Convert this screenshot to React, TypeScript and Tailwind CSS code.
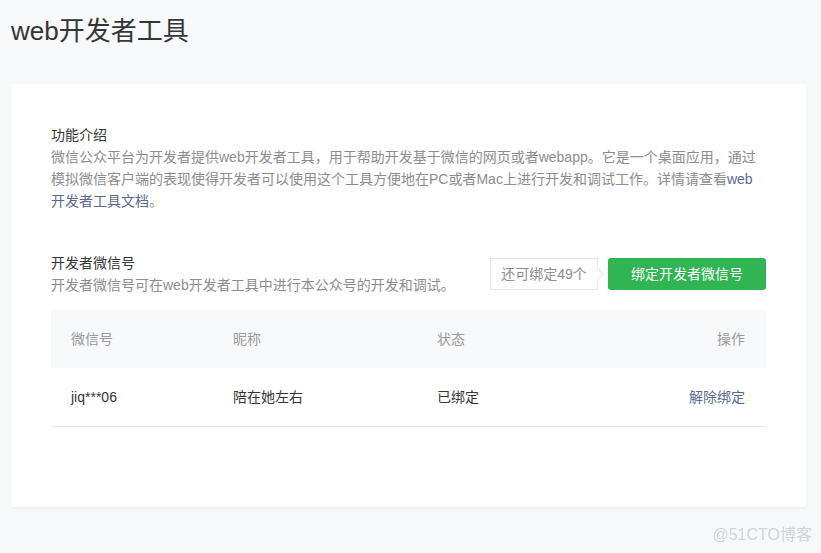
import React from "react";

const FONT = "font-['Liberation_Sans','Noto_Sans_CJK_SC',sans-serif]";

const App: React.FC = () => {
  return (
    <div className={`${FONT} relative h-[553px] w-[821px] overflow-hidden bg-[#f6f8f9] text-[14px] leading-[22px] text-[#353535]`}>
      <h1 className="pl-[11px] pr-[15px] pt-[12px] text-[26px] font-normal leading-[38px]">web开发者工具</h1>

      <div className="ml-[11px] mt-[34px] h-[423px] w-[795px] rounded-[3px] bg-white px-[40px] pt-[40px] shadow-[0_1px_2px_rgba(150,150,150,0.12)]">
        {/* intro */}
        <section>
          <h2 className="font-normal">功能介绍</h2>
          <p className="w-[715px] text-[#8d8d8d]">
            微信公众平台为开发者提供web开发者工具，用于帮助开发基于微信的网页或者webapp。它是一个桌面应用，通过模拟微信客户端的表现使得开发者可以使用这个工具方便地在PC或者Mac上进行开发和调试工作。详情请查看
            <a className="text-[#576b95]">web开发者工具文档</a>。
          </p>
        </section>

        {/* developer accounts */}
        <section className="mt-[40px] flex items-center justify-between">
          <div>
            <h2 className="font-normal">开发者微信号</h2>
            <p className="text-[#8d8d8d]">开发者微信号可在web开发者工具中进行本公众号的开发和调试。</p>
          </div>
          <div className="flex items-center">
            <span className="relative flex h-[32px] w-[108px] items-center justify-center border border-[#e7e7eb] text-[#8d8d8d]">
              还可绑定49个
              <i className="absolute right-[-5px] top-[11px] h-[8px] w-[8px] rotate-45 border-r border-t border-[#e7e7eb] bg-white" />
            </span>
            <button className="ml-[10px] h-[32px] w-[158px] rounded-[3px] bg-[#31b553] text-center text-white">绑定开发者微信号</button>
          </div>
        </section>

        <table className="mt-[14px] w-[715px] table-fixed border-collapse">
          <thead>
            <tr className="h-[58px] bg-[#f6f8f9] text-[#9a9a9a]">
              <th className="w-[182px] pl-[20px] text-left font-normal">微信号</th>
              <th className="w-[204px] text-left font-normal">昵称</th>
              <th className="text-left font-normal">状态</th>
              <th className="pr-[21px] text-right font-normal">操作</th>
            </tr>
          </thead>
          <tbody>
            <tr className="h-[58px] border-b border-[#e7e7eb]">
              <td className="pl-[20px]">jiq***06</td>
              <td>陪在她左右</td>
              <td>已绑定</td>
              <td className="pr-[21px] text-right text-[#576b95]">解除绑定</td>
            </tr>
          </tbody>
        </table>
      </div>

      <span className="absolute bottom-[8px] right-[9px] text-[16px] leading-[20px] text-[#d0d2d4] blur-[0.4px]">@51CTO博客</span>
    </div>
  );
};

export default App;
